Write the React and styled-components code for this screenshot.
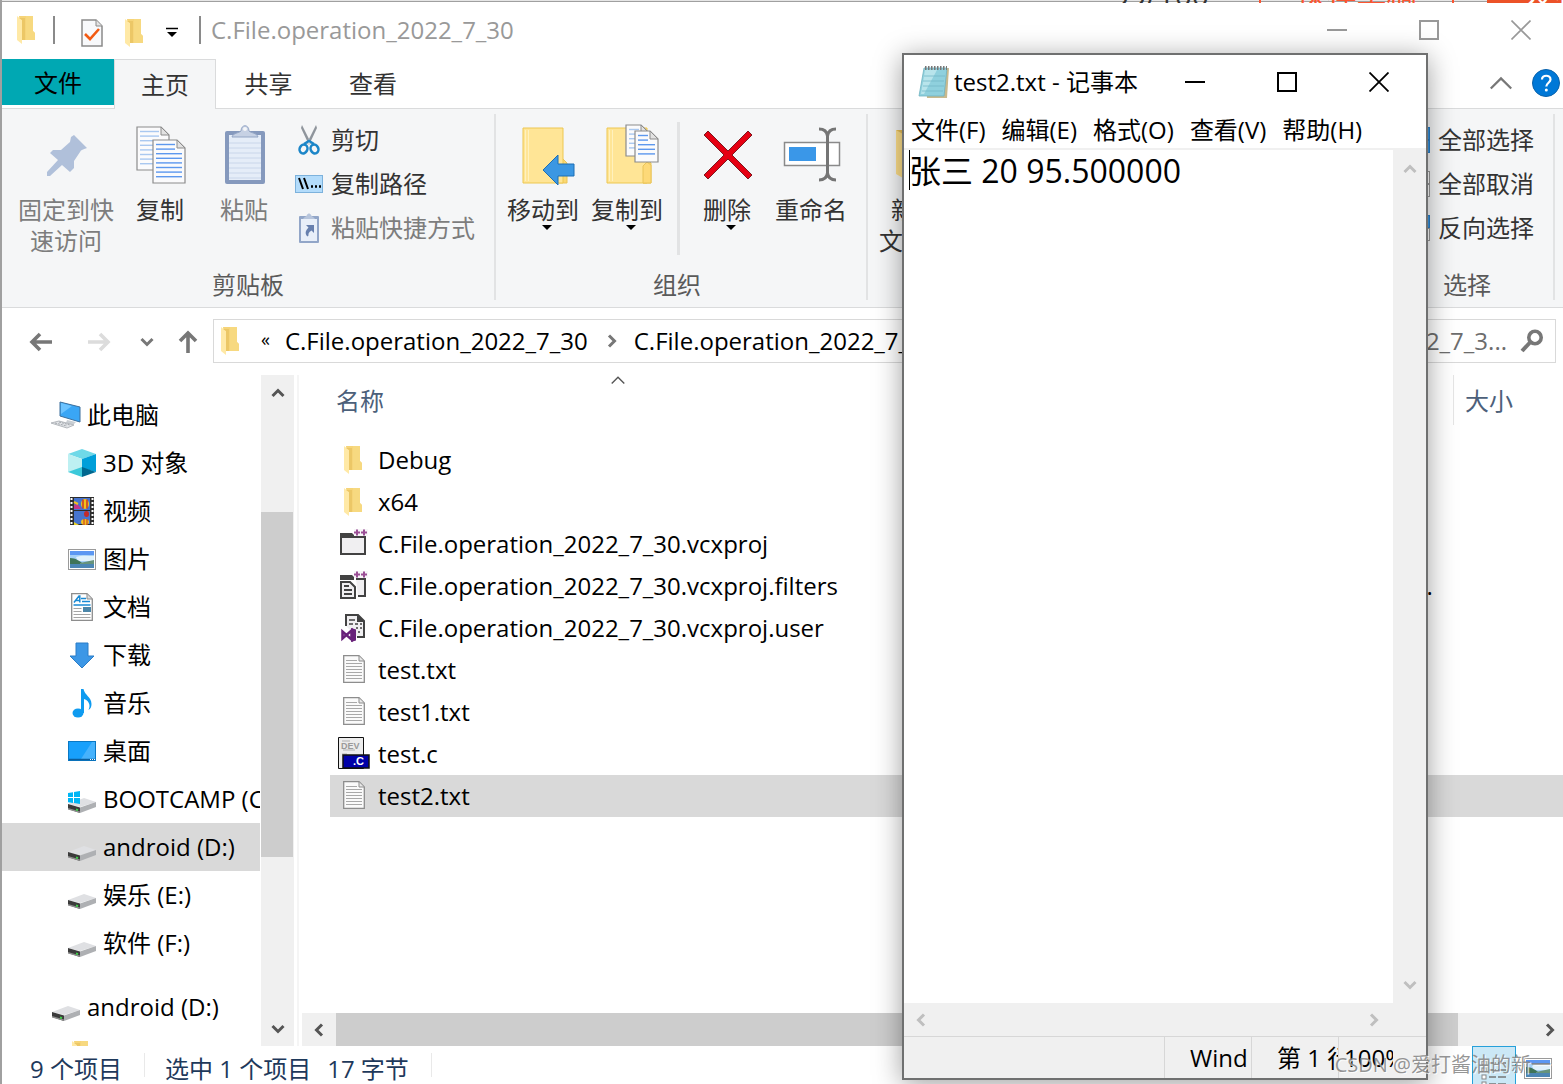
import React from "react";
import styled, { createGlobalStyle, css } from "styled-components";

const Global = createGlobalStyle`
  *, *::before, *::after { box-sizing: border-box; }
  html, body, #root { height: 100%; }
  body { margin: 0; background: #fff; overflow: hidden; }
  body, button, input, textarea, table {
    font-family: "Open Sans", "Noto Sans CJK SC", sans-serif;
    font-size: 24px;
    line-height: 32px;
    color: #000;
  }
  svg { display: block; flex: none; }
`;

const Button = styled.button`
  display: flex;
  align-items: center;
  justify-content: center;
  border: 0;
  padding: 0;
  background: transparent;
  color: inherit;
  white-space: nowrap;
`;

/* ---------- icons ---------- */

const SmallFolder = () => (
  <svg width="20" height="28" viewBox="0 0 20 28">
    <path d="M2 0h14v15l2 2v7H5z" fill="#f6d478" />
    <path d="M9 0h7v15l2 2v7H9z" fill="#f9dc86" opacity=".6" />
    <path d="M0 0l5 4v24l-5-4z" fill="#ffe9a6" />
    <path d="M5 4v20h3V2H2z" fill="#ecc766" />
  </svg>
);

const CheckDoc = () => (
  <svg width="22" height="28" viewBox="0 0 22 28">
    <path d="M1 1h14l6 6v20H1z" fill="#f8f9fb" stroke="#8a8a8a" strokeWidth="1.5" />
    <path d="M15 1v6h6" fill="#e4e4e4" stroke="#8a8a8a" />
    <path d="M4 15l5 5 9-10" fill="none" stroke="#f25a12" strokeWidth="2.6" />
  </svg>
);

const Customize = () => (
  <svg width="12" height="12" viewBox="0 0 12 12">
    <path d="M0 1.500h12" stroke="#000" strokeWidth="1.500" />
    <path d="M1 5h10l-5 5z" fill="#000" />
  </svg>
);

const PinIcon = () => (
  <svg width="40" height="42" viewBox="0 0 40 42">
    <path d="M27 1L40 14l-4 1.500-2 1L27 27v7l-4 4-8-7L3 42H0v-4l11-12-8-7 3-3h8l9-8 1-5z" fill="#b0c0da" />
  </svg>
);

const Page = ({ x, y, w, h, faded }) => {
  const count = Math.floor((h - 5) / 4.6);
  return (
    <g>
      <path d={`M${x} ${y}h${w - 8}l8 8v${h - 8}h${-w}z`} fill="#fbfbfc" stroke="#8c8c8c" strokeWidth="1.2" />
      {Array.from({ length: count }, (_, i) => (
        <path key={i} d={`M${x + 3} ${y + 4.5 + i * 4.6}H${i < 2 ? x + w - 10 : x + w - 3}`} stroke={faded ? "#a9c8f0" : "#5d98ee"} strokeWidth="1.4" />
      ))}
      <path d={`M${x + w - 8} ${y}v8h8z`} fill="#e2e2e2" stroke="#8c8c8c" />
    </g>
  );
};

const CopyIcon = () => (
  <svg width="50" height="58" viewBox="0 0 50 58">
    <Page x={1} y={1} w={32} h={43} faded />
    <Page x={17} y={14} w={32} h={43} />
  </svg>
);

const PasteIcon = () => (
  <svg width="42" height="60" viewBox="0 0 42 60">
    <rect x="1" y="6" width="40" height="53" rx="2" fill="#8599bd" />
    <path d="M5 10h32v45H5z" fill="#e5edf8" />
    {[18, 23, 28, 33, 38, 43, 48, 53].map((y) => (
      <path key={y} d={`M5 ${y}h32`} stroke="#c9d6ea" />
    ))}
    <path d="M8 12c1-4 7-4 9-6 0-7 8-7 8 0 2 2 8 2 9 6z" fill="#c6d1e4" stroke="#93a5c4" />
    <circle cx="21" cy="4" r="2" fill="#f5f6f8" />
  </svg>
);

const ScissorsIcon = () => (
  <svg width="22" height="30" viewBox="0 0 22 30">
    <path d="M4 0l9 18-2 2L3 3zM18 0L9 18l2 2L19 3z" fill="#8f959c" />
    <ellipse cx="5.500" cy="24" rx="3.800" ry="4.500" fill="none" stroke="#1c86c8" strokeWidth="2.500" transform="rotate(25 5.500 24)" />
    <ellipse cx="16.500" cy="24" rx="3.800" ry="4.500" fill="none" stroke="#1c86c8" strokeWidth="2.500" transform="rotate(-25 16.500 24)" />
    <path d="M6 19l5-3 5 3" fill="none" stroke="#1c86c8" strokeWidth="2.500" />
  </svg>
);

const PathIcon = () => (
  <svg width="28" height="18" viewBox="0 0 28 18">
    <rect x=".5" y=".5" width="27" height="17" fill="#b3dcfb" stroke="#7db2dc" />
    <path d="M4 3l4 11M9 3l4 11" stroke="#000" strokeWidth="2" />
    <path d="M16 11.500h2M20 11.500h2M24 11.500h2" stroke="#000" strokeWidth="2.500" />
  </svg>
);

const ShortcutIcon = () => (
  <svg width="20" height="30" viewBox="0 0 20 30">
    <rect x="0" y="3" width="20" height="27" rx="1" fill="#92a6c8" />
    <path d="M2 6h16v22H2z" fill="#e8eff9" />
    <path d="M4 6c1-2 3-2 4-4 1-2 3-2 4 0 1 2 3 2 4 4z" fill="#b7c5dc" />
    <path d="M7 12h8v8l-2.500-2.500c-3 2-3 3-3 5l-1 1c-3-3-2-6 1-9z" fill="#6780ae" />
  </svg>
);

const BigFolder = ({ children }) => (
  <svg width="54" height="64" viewBox="0 0 54 64">
    <path d="M37 40l4-4 4 4v20h-8z" fill="#fbd873" stroke="#eac458" />
    <path d="M1 5h40v55H1z" fill="#ffe596" stroke="#edc750" />
    <path d="M3.500 7v51M6.500 7v51" stroke="#fff1be" />
    {children}
  </svg>
);

const MoveIcon = () => (
  <BigFolder>
    <path d="M21 47l15-15v9h16v12H36v9z" fill="#3b97e3" stroke="#1c6fb5" />
  </BigFolder>
);

const CopyToIcon = () => (
  <BigFolder>
    <path d="M37 60V43l4-4 4 3v18z" fill="#fdd978" stroke="#eac458" />
    <Page x={20} y={2} w={23} h={31} faded />
    <Page x={29} y={8} w={23} h={31} />
  </BigFolder>
);

const DeleteIcon = () => (
  <svg width="50" height="50" viewBox="0 0 50 50">
    <path d="M1 5l4-4 20 20L45 1l4 4-20 20 20 20-4 4-20-20L5 49l-4-4 20-20z" fill="#e60012" stroke="#7d1a20" />
  </svg>
);

const RenameIcon = () => (
  <svg width="58" height="56" viewBox="0 0 58 56">
    <rect x="1.500" y="15.500" width="55" height="23" fill="#fff" stroke="#8a8a8a" strokeWidth="1.500" />
    <rect x="6" y="20" width="27" height="14" fill="#3a97e8" />
    <path d="M36 2c6 0 8 3 8.500 7 .5-4 2.500-7 8.500-7M36 53c6 0 8-3 8.500-7 .5 4 2.500 7 8.500 7M44.500 8v39" fill="none" stroke="#757575" strokeWidth="3" />
  </svg>
);

const NewFolderIcon = () => (
  <svg width="40" height="54" viewBox="0 0 40 54">
    <path d="M0 2h38v45H12z" fill="#e8bf57" />
    <path d="M0 2l12 7v44L0 46z" fill="#ffe08a" />
  </svg>
);

const TilesIcon = ({ top, bottom }) => (
  <svg width="28" height="26" viewBox="0 0 28 26">
    {[0, 9, 18].map((x) => (
      <g key={x}>
        <rect x={x + 0.5} y=".5" width="9" height="12" fill={top ? "#3a97e3" : "#fff"} stroke={top ? "#2a7fc9" : "#9a9a9a"} />
        <rect x={x + 0.5} y="13.500" width="9" height="12" fill={bottom ? "#3a97e3" : "#fff"} stroke={bottom ? "#2a7fc9" : "#9a9a9a"} />
      </g>
    ))}
  </svg>
);

const DropArrow = () => (
  <svg width="10" height="6" viewBox="0 0 10 6">
    <path d="M0 0h10L5 5z" fill="#000" />
  </svg>
);

const turns = { up: 0, right: 90, down: 180, left: 270 };
const Chevron = ({ dir, color = "#555", size = 14, weight = 3 }) => (
  <svg width={size} height={size} viewBox="0 0 14 14">
    <path d="M1.500 10L7 4.500l5.500 5.500" fill="none" stroke={color} strokeWidth={weight} transform={`rotate(${turns[dir]} 7 7)`} />
  </svg>
);

const Arrow = ({ dir, color }) => (
  <svg width="24" height="24" viewBox="0 0 24 24">
    <path d="M12 23V3M4 11l8-8 8 8" fill="none" stroke={color} strokeWidth="3.600" transform={`rotate(${turns[dir]} 12 12)`} />
  </svg>
);

const MinIcon = ({ color, weight }) => (
  <svg width="20" height="20" viewBox="0 0 20 20"><path d="M0 10h20" stroke={color} strokeWidth={weight} /></svg>
);
const MaxIcon = ({ color, weight }) => (
  <svg width="20" height="20" viewBox="0 0 20 20"><rect x="1" y="1" width="18" height="18" fill="none" stroke={color} strokeWidth={weight} /></svg>
);
const CloseIcon = ({ color, weight }) => (
  <svg width="20" height="20" viewBox="0 0 20 20"><path d="M.5 .5l19 19M19.500 .5l-19 19" stroke={color} strokeWidth={weight} /></svg>
);

const HelpIcon = () => (
  <svg width="28" height="28" viewBox="0 0 28 28">
    <circle cx="14" cy="14" r="13.500" fill="#0078d7" stroke="#0a62ab" />
    <path d="M10 10.500c0-5 8.500-5 8.500 0 0 3-4.200 3.500-4.200 7" fill="none" stroke="#fff" strokeWidth="2.200" />
    <circle cx="14.300" cy="21" r="1.500" fill="#fff" />
  </svg>
);

const SearchIcon = () => (
  <svg width="24" height="24" viewBox="0 0 24 24">
    <circle cx="15" cy="8.500" r="6.200" fill="none" stroke="#777" strokeWidth="3.600" />
    <path d="M10.500 13L2 22" stroke="#777" strokeWidth="4" />
  </svg>
);

const ComputerIcon = () => (
  <svg width="32" height="28" viewBox="0 0 32 28">
    <path d="M10 1l20 5v15l-20-6z" fill="#3aa6f5" stroke="#3c6f9c" />
    <path d="M11 2l11 3-11 8z" fill="#6cc3ff" />
    <path d="M17 19l9 2-3 3-7-2z" fill="#c9ced3" />
    <path d="M1 22l8-2 15 4-7 3z" fill="#e3e5e8" stroke="#b4b8bd" />
    <path d="M5 22l12 3M9 21l11 3" stroke="#a2a7ad" strokeDasharray="2 1" />
  </svg>
);
const CubeIcon = () => (
  <svg width="28" height="28" viewBox="0 0 28 28">
    <path d="M0 5l14-5 14 5-14 5z" fill="#6fd9e8" />
    <path d="M0 5l14 5v13L0 23z" fill="#bdf0f2" />
    <path d="M28 5l-14 5v9l14 4z" fill="#009fd9" />
    <path d="M0 23l14-5v10z" fill="#3cc9da" />
    <path d="M28 23l-14-5v10z" fill="#00688f" />
  </svg>
);
const VideoIcon = () => (
  <svg width="24" height="28" viewBox="0 0 24 28">
    <path d="M0 0h24v28H0z" fill="#2d2d2d" />
    <path d="M4 1h16v12H4zM4 14h16v13H4z" fill="#4674cf" />
    <path d="M1.500 1v27M22.500 1v27" stroke="#fff" strokeWidth="2" strokeDasharray="2 2" />
    <ellipse cx="15" cy="7" rx="4" ry="5" fill="#f2c21c" />
    <path d="M13 2.500v9M17 2.500v9" stroke="#c42b2b" strokeWidth="1.400" />
    <path d="M4 8c3-2 5 0 7 4H4z" fill="#c2388b" />
    <path d="M4 5l4 2" stroke="#f2c21c" strokeWidth="2" />
    <ellipse cx="16.500" cy="17" rx="2.500" ry="3" fill="#c42b2b" />
    <ellipse cx="15" cy="25" rx="4" ry="3" fill="#f2c21c" />
    <path d="M14 22v6M17 22v6" stroke="#c42b2b" />
    <path d="M4 25l5 3H4z" fill="#e9d22a" />
  </svg>
);
const PictureIcon = () => (
  <svg width="28" height="21" viewBox="0 0 28 21">
    <rect x=".5" y=".5" width="27" height="20" fill="#fff" stroke="#9a9a9a" />
    <path d="M2 2h24v17H2z" fill="#a5d0f6" />
    <path d="M2 2h24v4H2z" fill="#5c97f2" />
    <path d="M8 8c6-2 12-1 18-1v5H10z" fill="#e0f1fb" />
    <path d="M2 9c6 0 9 3 14 6H2z" fill="#3f7458" />
    <path d="M12 14l14-3v4H12z" fill="#66937c" />
    <path d="M2 15h24v4H2z" fill="#4c86b4" />
  </svg>
);
const DocumentIcon = () => (
  <svg width="22" height="28" viewBox="0 0 22 28">
    <path d="M.7 .7H16l5.300 5.300v21.300H.7z" fill="#fff" stroke="#8d8d8d" strokeWidth="1.300" />
    <path d="M16 1v5h5" fill="#ddd" stroke="#8d8d8d" />
    <path d="M3 9.500l5-6.500h.8v6.500M5 7.500h4" fill="none" stroke="#1a8ad4" strokeWidth="1.500" />
    <path d="M10 5.500h5M11 8.500h8M2.500 12h17" stroke="#1a8ad4" strokeWidth="1.300" />
    <path d="M2.500 15.500h8M2.500 18.500h8M2.500 21.500h17M2.500 24.500h17" stroke="#a5a5a5" />
    <path d="M12 14h8v5h-8z" fill="#4c86a8" />
  </svg>
);
const DownloadIcon = () => (
  <svg width="26" height="27" viewBox="0 0 26 27">
    <path d="M7 1h12v13h6L13 26 1 14h6z" fill="#3c97e6" stroke="#2b7dc7" />
  </svg>
);
const MusicIcon = () => (
  <svg width="20" height="29" viewBox="0 0 20 29">
    <ellipse cx="6" cy="24" rx="5.500" ry="4.500" fill="#0f9bf0" />
    <path d="M9 0h2.500c1 6 8 8 8 15 0 3-1 5-3 6 3-6-1-10-4.500-11V24H9z" fill="#0f9bf0" />
  </svg>
);
const DesktopIcon = () => (
  <svg width="28" height="21" viewBox="0 0 28 21">
    <rect x=".5" y=".5" width="27" height="19" fill="#18a0fb" stroke="#0a78c4" />
    <path d="M13 18L24 1h3v17z" fill="#46b2fc" />
    <path d="M1 18.500h26" stroke="#0b5e9c" strokeWidth="1.500" />
    <path d="M22 18.500h5" stroke="#fff" strokeDasharray="1 1" />
  </svg>
);
const DriveIcon = ({ system }) => (
  <svg width="28" height="28" viewBox="0 0 28 28">
    <path d="M0 19l16-6 12 4-16 5z" fill="#dfe0e3" />
    <path d="M0 19l12 3.500V28L0 24z" fill="#3b3b3b" />
    <path d="M12 22.500L28 17v5l-16 6z" fill="#aeb0b3" />
    <path d="M0 24.500l12 3.500v-1.500L0 23z" fill="#8e8e8e" />
    <path d="M8 24.500l2 .6" stroke="#41d04b" strokeWidth="2" />
    {system && <path d="M0 8l5-.8V12H0zM6 7l6-1v6H6zM0 13h5v5l-5-.8zM6 13h6v6l-6-1z" fill="#00b6f5" />}
  </svg>
);
const VcxprojIcon = () => (
  <svg width="28" height="30" viewBox="0 0 28 30">
    <path d="M1 8h24v17H1z" fill="#f0eff1" stroke="#424242" strokeWidth="2" />
    <path d="M0 4h12l2 2v3H0z" fill="#424242" />
    <path d="M14 0h14v7H14z" fill="#f7f6f8" />
    <path d="M14 3.500h6M17 .5v6M21 3.500h6M24 .5v6" stroke="#9b4f96" strokeWidth="2" />
  </svg>
);
const FiltersIcon = () => (
  <svg width="28" height="30" viewBox="0 0 28 30">
    <path d="M16 8h9v17h-7" fill="#f0eff1" stroke="#424242" strokeWidth="2" />
    <path d="M0 4h12l2 2v3H0z" fill="#424242" />
    <path d="M1 11h9l5 5v11H1z" fill="#f0eff1" stroke="#424242" strokeWidth="2" />
    <path d="M4 15h5M4 19h8M4 23h8" stroke="#424242" strokeWidth="2" />
    <path d="M14 0h14v7H14z" fill="#f7f6f8" />
    <path d="M14 3.500h6M17 .5v6M21 3.500h6M24 .5v6" stroke="#9b4f96" strokeWidth="2" />
  </svg>
);
const UserIcon = () => (
  <svg width="28" height="30" viewBox="0 0 28 30">
    <path d="M6 13V2h12l6 6v16h-7" fill="#f0eff1" stroke="#424242" strokeWidth="2" />
    <path d="M17 1v8h8z" fill="#424242" />
    <path d="M9 7h6M9 11h4M15 11h3M20 11h2M16 15h2M20 15h2M18 19h2" stroke="#424242" strokeWidth="1.500" />
    <path d="M2.500 18.500v7l9-8v9z" fill="none" stroke="#68217a" strokeWidth="2.500" />
    <path d="M11 15l5 1.500v11L11 29z" fill="#68217a" />
  </svg>
);
const TextFileIcon = () => (
  <svg width="22" height="30" viewBox="0 0 22 30">
    <path d="M.7 .7H16l5.300 5.300v21.300H.7z" fill="#fafafa" stroke="#8d8d8d" strokeWidth="1.300" />
    <path d="M16 1v5h5" fill="#e8e8e8" stroke="#8d8d8d" />
    {[5.5, 8.5, 11.5, 14.5, 17.5, 20.5, 23.5].map((y) => (
      <path key={y} d={`M3 ${y}h${y < 6 ? 11 : 16}`} stroke="#a8a8a8" />
    ))}
  </svg>
);
const DevCIcon = () => (
  <svg width="32" height="34" viewBox="0 0 32 34">
    <path d="M.5 .5h25v31H.5z" fill="#ececec" stroke="#111" />
    <path d="M4 4h8M5 13h12M4 17h5" stroke="#c4c4c4" strokeWidth="1.500" />
    <text x="3" y="12" fontSize="9" fontWeight="700" fill="#9a9a9a" fontFamily="Liberation Sans, sans-serif">DEV</text>
    <rect x="5" y="18" width="26" height="13" fill="#0000a8" stroke="#111" strokeWidth="1.500" />
    <text x="15" y="28" fontSize="11" fontWeight="700" fill="#fff" fontFamily="Liberation Sans, sans-serif">.C</text>
  </svg>
);
const NotepadIcon = () => (
  <svg width="32" height="34" viewBox="0 0 32 34">
    <path d="M7 4l24-1-2 30H9z" fill="#c9b98d" />
    <path d="M6 3h23l-3 28H1z" fill="#8fd0dd" stroke="#6fb2c0" strokeWidth=".8" />
    <path d="M7 5h12L6 29H3z" fill="#c2e9ef" opacity=".8" />
    <path d="M6 11h21M5 16h21M5 21h21M4 26h21" stroke="#74b8c8" strokeWidth=".8" />
    <path d="M7 3h22" stroke="#777" strokeWidth="4" strokeDasharray="1.500 1.500" />
  </svg>
);
const DetailsIcon = () => (
  <svg width="26" height="26" viewBox="0 0 26 26">
    {[1, 8, 15, 22].map((y) => (
      <g key={y}>
        <rect x="1" y={y} width="4" height="4" fill="#fff" stroke="#888" />
        <path d={`M8 ${y + 2}h7M17 ${y + 2}h8`} stroke="#777" strokeWidth="1.500" />
      </g>
    ))}
  </svg>
);

/* ---------- explorer ---------- */

const Desktop = styled.div`
  position: relative;
  height: 100vh;
  overflow: hidden;
`;

const Explorer = styled.main`
  display: flex;
  flex-direction: column;
  height: 100%;
  border-left: 2px solid #a0a0a0;
`;

const BackStrip = styled.div`
  flex: none;
  display: flex;
  align-items: flex-end;
  justify-content: flex-end;
  height: 3px;
  overflow: hidden;
  background: linear-gradient(#e6e6e6 0 1px, #a0a0a0 1px 2px, #fff 2px);
  font-size: 30px;
`;
const StripText = styled.span`
  margin: 0 50px -8px 0;
  line-height: 32px;
  color: #333;
`;
const StripDraft = styled.span`
  width: 195px;
  margin: 0 33px -8px 0;
  border: solid #fc5531;
  border-width: 0 2px;
  line-height: 32px;
  text-align: center;
  color: #fc5531;
`;
const StripPublish = styled.span`
  width: 76px;
  margin-bottom: -8px;
  padding-left: 38px;
  background: #ec5228;
  line-height: 32px;
  white-space: nowrap;
  color: #fff;
`;

const TitleBar = styled.header`
  flex: none;
  display: flex;
  align-items: center;
  height: 56px;
  padding: 0 0 2px 15px;
  color: #999;
`;
const QuickBar = styled.div`
  display: flex;
  align-items: center;
`;
const Rule = styled.span`
  width: 2px;
  height: 28px;
  background: #8a8a8a;
  margin: 0 ${(p) => p.$after}px 0 ${(p) => p.$before}px;
`;
const QuickButton = styled(Button)`
  width: ${(p) => p.$w || 43}px;
  height: 40px;
  padding-top: 5px;
`;
const Title = styled.h1`
  flex: 1;
  margin: 0;
  font: inherit;
`;
const CaptionButtons = styled.div`
  display: flex;
  gap: 8px;
`;
const CaptionButton = styled(Button)`
  width: 84px;
  height: 48px;
`;

const Tabs = styled.nav`
  flex: none;
  display: flex;
  height: 50px;
  border-bottom: 1px solid #dadbdc;
`;
const Tab = styled(Button)`
  width: ${(p) => p.$w}px;
  height: 50px;
  color: #333;
  ${(p) => p.$kind === "file" && css`
    height: 46px;
    padding-top: 2px;
    background: #00a8b3;
    color: #000;
  `}
  ${(p) => p.$kind === "open" && css`
    background: #f5f6f7;
    border: 1px solid #dadbdc;
    border-bottom: 0;
  `}
`;
const TabTools = styled.div`
  display: flex;
  align-items: center;
  gap: 18px;
  margin-left: auto;
  padding: 0 3px 2px 0;
`;

const Ribbon = styled.section`
  flex: none;
  display: flex;
  align-items: stretch;
  height: 199px;
  padding: 5px 8px 7px 0;
  background: #f5f6f7;
  border-bottom: 1px solid #dadbdc;
  color: #333;
`;
const Group = styled.div`
  display: flex;
  flex-direction: column;
  padding: 0 ${(p) => p.$right}px 0 ${(p) => p.$left}px;
  width: ${(p) => (p.$w ? `${p.$w}px` : "auto")};
  flex: ${(p) => (p.$grow ? "1" : "none")};
  border-right: 2px solid #e2e3e4;
`;
const GroupBody = styled.div`
  display: flex;
  flex: 1;
`;
const GroupLabel = styled.div`
  height: 31px;
  text-align: center;
  color: #5a5a5a;
`;
const BigButton = styled(Button)`
  flex-direction: column;
  justify-content: flex-start;
  width: ${(p) => p.$w || 84}px;
  padding-top: 9px;
  color: ${(p) => (p.$off ? "#7d7d7d" : "#333")};
`;
const IconBox = styled.span`
  display: flex;
  align-items: center;
  justify-content: center;
  height: 64px;
  margin-bottom: 7px;
  padding-left: ${(p) => (p.$menu ? 12 : 2)}px;
`;
const BigLabel = styled.span`
  line-height: 31px;
  white-space: pre-line;
`;
const ArrowBox = styled.span`
  padding-left: 8px;
`;
const GroupRule = styled.span`
  width: 3px;
  height: 133px;
  margin: 8px 5px 0 8px;
  background: #e2e3e4;
`;
const SmallList = styled.div`
  display: flex;
  flex-direction: column;
  padding: 4px 0 0 ${(p) => p.$left}px;
`;
const SmallButton = styled(Button)`
  justify-content: flex-start;
  gap: 8px;
  height: 44px;
  color: ${(p) => (p.$off ? "#7d7d7d" : "#333")};
`;
const SmallIcon = styled.span`
  display: flex;
  justify-content: center;
  width: 28px;
`;

const AddressRow = styled.div`
  flex: none;
  display: flex;
  height: 67px;
  padding: 11px 7px 12px 10px;
`;
const NavButton = styled(Button)`
  width: ${(p) => p.$w}px;
  height: 46px;
`;
const AddressBox = styled.div`
  flex: 1;
  display: flex;
  align-items: center;
  margin-left: 3px;
  padding-left: 7px;
  border: 1px solid #d9d9d9;
  overflow: hidden;
`;
const Crumb = styled(Button)`
  margin: 0 17px 0 15px;
`;
const Overflow = styled.span`
  display: flex;
  margin-left: 20px;
  padding-bottom: 4px;
  font-size: 18px;
  line-height: 24px;
`;
const SearchBox = styled.label`
  display: flex;
  align-items: center;
  width: 420px;
  margin-left: 12px;
  padding-right: 11px;
  border: 1px solid #d9d9d9;
`;
const SearchInput = styled.input`
  flex: 1;
  min-width: 0;
  margin-right: 13px;
  border: 0;
  outline: 0;
  padding: 0;
  background: transparent;
  text-align: right;
  &::placeholder { color: #6d6d6d; opacity: 1; }
`;

const Body = styled.div`
  flex: 1;
  min-height: 0;
  display: flex;
`;
const NavPane = styled.nav`
  width: 258px;
  padding-top: 16px;
  overflow: hidden;
`;
const NavItem = styled.a`
  display: flex;
  align-items: center;
  gap: 7px;
  height: 48px;
  padding-left: ${(p) => (p.$level ? 66 : 50)}px;
  margin-top: ${(p) => (p.$gap ? 16 : 0)}px;
  background: ${(p) => (p.$on ? "#d9d9d9" : "transparent")};
  color: #000;
  text-decoration: none;
  white-space: nowrap;
`;
const NavIcon = styled.span`
  display: flex;
  justify-content: center;
  align-items: center;
  width: 28px;
`;
const VScroll = styled.div`
  display: flex;
  flex-direction: column;
  width: 33px;
  margin-left: 1px;
  background: #f0f0f0;
`;
const VThumb = styled.div`
  flex: 345;
  margin-right: 1px;
  background: #cdcdcd;
`;
const Space = styled.div`
  flex: ${(p) => p.$grow};
`;
const ScrollButton = styled(Button)`
  flex: none;
  width: ${(p) => p.$w || 33}px;
  height: ${(p) => p.$h || 34}px;
`;
const Divider = styled.div`
  width: 2px;
  margin: 0 3px;
  background: #f5f5f5;
`;
const Content = styled.section`
  flex: 1;
  min-width: 0;
  display: flex;
  flex-direction: column;
`;
const ListArea = styled.div`
  flex: 1;
  min-height: 0;
  padding-left: 28px;
  overflow: hidden;
`;
const Table = styled.table`
  width: 100%;
  table-layout: fixed;
  border-collapse: collapse;
`;
const Th = styled.th`
  width: ${(p) => (p.$w ? `${p.$w}px` : "auto")};
  height: 64px;
  padding: 0;
  vertical-align: top;
  text-align: left;
  font-weight: 400;
  color: #4c607a;
`;
const HeadCell = styled.div`
  display: flex;
  flex-direction: column;
  height: 50px;
  padding: ${(p) => (p.$sorted ? 0 : 10)}px 0 0 ${(p) => (p.$line ? 11 : 6)}px;
  border-left: ${(p) => (p.$line ? "1px solid #e5e5e5" : "0")};
`;
const SortMark = styled.span`
  display: flex;
  justify-content: center;
  align-items: center;
  height: 10px;
  padding-right: 10px;
`;
const Row = styled.tr`
  height: 42px;
  background: ${(p) => (p.$on ? "#d9d9d9" : "transparent")};
`;
const Td = styled.td`
  padding: 0;
  white-space: nowrap;
  overflow: hidden;
`;
const FileName = styled.div`
  display: flex;
  align-items: center;
  gap: 7px;
  padding-left: 7px;
`;
const FileIcon = styled.span`
  display: flex;
  justify-content: center;
  width: 34px;
`;
const HScroll = styled.div`
  flex: none;
  display: flex;
  height: 33px;
  background: #f0f0f0;
`;
const HThumb = styled.div`
  flex: 1122;
  background: #cdcdcd;
`;

const StatusBar = styled.footer`
  flex: none;
  display: flex;
  align-items: center;
  height: 38px;
  padding-left: 28px;
  color: #1e395b;
`;
const StatusText = styled.span`
  padding-top: 8px;
  margin-right: ${(p) => p.$gap}px;
  white-space: nowrap;
`;
const StatusRule = styled.span`
  width: 1px;
  height: 24px;
  margin-right: 20px;
  background: #e9e9e9;
`;
const ViewButtons = styled.div`
  display: flex;
  margin-left: auto;
  gap: 8px;
  padding-right: 11px;
`;
const ViewButton = styled(Button)`
  height: 38px;
  padding-top: 6px;
  ${(p) => p.$on && css`
    width: 44px;
    padding-top: 14px;
    border: 1px solid #26a0da;
    border-bottom: 0;
    background: #cbe8f6;
  `}
`;

/* ---------- notepad ---------- */

const Notepad = styled.section`
  position: absolute;
  top: 53px;
  right: 135px;
  bottom: 4px;
  width: 526px;
  display: flex;
  flex-direction: column;
  border: 2px solid #6f7070;
  background: #fff;
  box-shadow: 0 4px 26px rgba(0, 0, 0, 0.38);
`;
const NoteTitle = styled.header`
  flex: none;
  display: flex;
  align-items: center;
  height: 57px;
  padding: 0 1px 3px 14px;
`;
const NoteName = styled.h2`
  flex: 1;
  margin: 0 0 0 4px;
  font: inherit;
  white-space: nowrap;
`;
const NoteCaption = styled(Button)`
  width: 92px;
  height: 48px;
`;
const Menu = styled.nav`
  flex: none;
  display: flex;
  gap: 16px;
  height: 36px;
  padding-left: 7px;
`;
const NoteBody = styled.div`
  flex: 1;
  min-height: 0;
  display: flex;
  border-top: 2px solid #f0f0f0;
`;
const Editor = styled.div`
  position: relative;
  flex: 1;
  display: flex;
`;
const Text = styled.textarea`
  flex: 1;
  border: 0;
  outline: 0;
  resize: none;
  padding: 0 5px;
  overflow: hidden;
  font-size: 32px;
  line-height: 42px;
`;
const Caret = styled.span`
  position: absolute;
  left: 5px;
  top: 0;
  width: 1px;
  height: 40px;
  background: #000;
`;
const NoteHScroll = styled.div`
  flex: none;
  display: flex;
  justify-content: space-between;
  height: 33px;
  padding-right: 33px;
  background: #f0f0f0;
`;
const NoteStatus = styled.footer`
  flex: none;
  display: flex;
  justify-content: flex-end;
  height: 42px;
  padding-right: 33px;
  border-top: 1px solid #d7d7d7;
  background: #f0f0f0;
`;
const NoteCell = styled.span`
  width: ${(p) => p.$w}px;
  padding: 5px 0 0 ${(p) => p.$left}px;
  border-left: 1px solid #d7d7d7;
  overflow: hidden;
  white-space: nowrap;
`;

const Watermark = styled.div`
  position: absolute;
  right: 12px;
  bottom: 4px;
  font-size: 20px;
  line-height: 30px;
  color: rgba(130, 130, 130, 0.85);
  text-shadow: 1px 1px 0 rgba(255, 255, 255, 0.8);
  white-space: nowrap;
  pointer-events: none;
`;

const navItems = [
  { label: "此电脑", icon: <ComputerIcon />, level: 0 },
  { label: "3D 对象", icon: <CubeIcon />, level: 1 },
  { label: "视频", icon: <VideoIcon />, level: 1 },
  { label: "图片", icon: <PictureIcon />, level: 1 },
  { label: "文档", icon: <DocumentIcon />, level: 1 },
  { label: "下载", icon: <DownloadIcon />, level: 1 },
  { label: "音乐", icon: <MusicIcon />, level: 1 },
  { label: "桌面", icon: <DesktopIcon />, level: 1 },
  { label: "BOOTCAMP (C:)", icon: <DriveIcon system />, level: 1 },
  { label: "android (D:)", icon: <DriveIcon />, level: 1, on: true },
  { label: "娱乐 (E:)", icon: <DriveIcon />, level: 1 },
  { label: "软件 (F:)", icon: <DriveIcon />, level: 1 },
  { label: "android (D:)", icon: <DriveIcon />, level: 0, gap: true },
  { label: "Android_D", icon: <SmallFolder />, level: 1 },
];

const files = [
  { name: "Debug", icon: <SmallFolder />, type: "文件夹" },
  { name: "x64", icon: <SmallFolder />, type: "文件夹" },
  { name: "C.File.operation_2022_7_30.vcxproj", icon: <VcxprojIcon />, type: "VC++ Project" },
  { name: "C.File.operation_2022_7_30.vcxproj.filters", icon: <FiltersIcon />, type: "VC++ Project Filter..." },
  { name: "C.File.operation_2022_7_30.vcxproj.user", icon: <UserIcon />, type: "Per-User Project" },
  { name: "test.txt", icon: <TextFileIcon />, type: "文本文档" },
  { name: "test1.txt", icon: <TextFileIcon />, type: "文本文档" },
  { name: "test.c", icon: <DevCIcon />, type: "C Source File" },
  { name: "test2.txt", icon: <TextFileIcon />, type: "文本文档", on: true },
];

const RibbonButton = ({ icon, label, w, off, menu, folder }) => (
  <BigButton $w={w} $off={off}>
    <IconBox $menu={folder}>{icon}</IconBox>
    <BigLabel>{label}</BigLabel>
    {menu && <ArrowBox><DropArrow /></ArrowBox>}
  </BigButton>
);

const ListButton = ({ icon, label, off }) => (
  <SmallButton $off={off}>
    <SmallIcon>{icon}</SmallIcon>
    {label}
  </SmallButton>
);

export default function App() {
  return (
    <>
      <Global />
      <Desktop>
        <Explorer>
          <BackStrip>
            <StripText>99/100</StripText>
            <StripDraft>保存草稿</StripDraft>
            <StripPublish>发布</StripPublish>
          </BackStrip>
          <TitleBar>
            <QuickBar>
              <SmallFolder />
              <Rule $before={16} $after={15} />
              <QuickButton aria-label="属性"><CheckDoc /></QuickButton>
              <QuickButton aria-label="新建文件夹"><SmallFolder /></QuickButton>
              <QuickButton $w={32} aria-label="自定义快速访问工具栏"><Customize /></QuickButton>
              <Rule $before={11} $after={10} />
            </QuickBar>
            <Title>C.File.operation_2022_7_30</Title>
            <CaptionButtons>
              <CaptionButton aria-label="最小化"><MinIcon color="#999" weight={2} /></CaptionButton>
              <CaptionButton aria-label="最大化"><MaxIcon color="#999" weight={2} /></CaptionButton>
              <CaptionButton aria-label="关闭"><CloseIcon color="#999" weight={1.6} /></CaptionButton>
            </CaptionButtons>
          </TitleBar>
          <Tabs>
            <Tab $w={112} $kind="file">文件</Tab>
            <Tab $w={102} $kind="open">主页</Tab>
            <Tab $w={105}>共享</Tab>
            <Tab $w={104}>查看</Tab>
            <TabTools>
              <Chevron dir="up" size={26} weight={1.2} color="#777" />
              <Button aria-label="帮助"><HelpIcon /></Button>
            </TabTools>
          </Tabs>
          <Ribbon>
            <Group $left={12} $right={12} $w={494}>
              <GroupBody>
                <RibbonButton w={104} off icon={<PinIcon />} label={"固定到快\n速访问"} />
                <RibbonButton icon={<CopyIcon />} label="复制" />
                <RibbonButton off icon={<PasteIcon />} label="粘贴" />
                <SmallList $left={9}>
                  <ListButton icon={<ScissorsIcon />} label="剪切" />
                  <ListButton icon={<PathIcon />} label="复制路径" />
                  <ListButton off icon={<ShortcutIcon />} label="粘贴快捷方式" />
                </SmallList>
              </GroupBody>
              <GroupLabel>剪贴板</GroupLabel>
            </Group>
            <Group $left={5} $right={13}>
              <GroupBody>
                <RibbonButton menu folder icon={<MoveIcon />} label="移动到" />
                <RibbonButton menu folder icon={<CopyToIcon />} label="复制到" />
                <GroupRule />
                <RibbonButton menu icon={<DeleteIcon />} label="删除" />
                <RibbonButton icon={<RenameIcon />} label="重命名" />
              </GroupBody>
              <GroupLabel>组织</GroupLabel>
            </Group>
            <Group $left={5} $right={5} $grow>
              <GroupBody>
                <RibbonButton icon={<NewFolderIcon />} label={"新建\n文件夹"} />
              </GroupBody>
              <GroupLabel>新建</GroupLabel>
            </Group>
            <Group $left={20} $right={20} $w={174}>
              <GroupBody>
                <SmallList $left={1}>
                  <ListButton icon={<TilesIcon top bottom />} label="全部选择" />
                  <ListButton icon={<TilesIcon />} label="全部取消" />
                  <ListButton icon={<TilesIcon top />} label="反向选择" />
                </SmallList>
              </GroupBody>
              <GroupLabel>选择</GroupLabel>
            </Group>
          </Ribbon>
          <AddressRow>
            <NavButton $w={58} aria-label="后退"><Arrow dir="left" color="#777" /></NavButton>
            <NavButton $w={58} aria-label="前进"><Arrow dir="right" color="#dcdcdc" /></NavButton>
            <NavButton $w={38} aria-label="最近位置"><Chevron dir="down" color="#777" /></NavButton>
            <NavButton $w={44} aria-label="上移"><Arrow dir="up" color="#777" /></NavButton>
            <AddressBox>
              <SmallFolder />
              <Overflow>«</Overflow>
              <Crumb>C.File.operation_2022_7_30</Crumb>
              <Chevron dir="right" color="#777" />
              <Crumb>C.File.operation_2022_7_30</Crumb>
            </AddressBox>
            <SearchBox>
              <SearchInput aria-label="搜索" placeholder="搜索“C.File.operation_2022_7_3..." />
              <SearchIcon />
            </SearchBox>
          </AddressRow>
          <Body>
            <NavPane>
              {navItems.map((n, i) => (
                <NavItem key={i} href="#" $level={n.level} $on={n.on} $gap={n.gap}>
                  <NavIcon>{n.icon}</NavIcon>
                  {n.label}
                </NavItem>
              ))}
            </NavPane>
            <VScroll>
              <ScrollButton $h={36} aria-label="向上滚动"><Chevron dir="up" /></ScrollButton>
              <Space $grow={101} />
              <VThumb />
              <Space $grow={155} />
              <ScrollButton aria-label="向下滚动"><Chevron dir="down" /></ScrollButton>
            </VScroll>
            <Divider />
            <Content>
              <ListArea>
                <Table>
                  <thead>
                    <tr>
                      <Th>
                        <HeadCell $sorted>
                          <SortMark><Chevron dir="up" size={16} weight={1.2} color="#555" /></SortMark>
                          名称
                        </HeadCell>
                      </Th>
                      <Th $w={300}><HeadCell $line>修改日期</HeadCell></Th>
                      <Th $w={243}><HeadCell $line>类型</HeadCell></Th>
                      <Th $w={110}><HeadCell $line>大小</HeadCell></Th>
                    </tr>
                  </thead>
                  <tbody>
                    {files.map((f) => (
                      <Row key={f.name} $on={f.on}>
                        <Td><FileName><FileIcon>{f.icon}</FileIcon>{f.name}</FileName></Td>
                        <Td />
                        <Td>{f.type}</Td>
                        <Td />
                      </Row>
                    ))}
                  </tbody>
                </Table>
              </ListArea>
              <HScroll>
                <ScrollButton $w={34} $h={33} aria-label="向左滚动"><Chevron dir="left" /></ScrollButton>
                <HThumb />
                <Space $grow={78} />
                <ScrollButton $w={27} $h={33} aria-label="向右滚动"><Chevron dir="right" /></ScrollButton>
              </HScroll>
            </Content>
          </Body>
          <StatusBar>
            <StatusText $gap={22}>9 个项目</StatusText>
            <StatusRule />
            <StatusText $gap={16}>选中 1 个项目</StatusText>
            <StatusText $gap={22}>17 字节</StatusText>
            <StatusRule />
            <ViewButtons>
              <ViewButton $on aria-label="详细信息"><DetailsIcon /></ViewButton>
              <ViewButton aria-label="大缩略图"><PictureIcon /></ViewButton>
            </ViewButtons>
          </StatusBar>
        </Explorer>

        <Notepad>
          <NoteTitle>
            <NotepadIcon />
            <NoteName>test2.txt - 记事本</NoteName>
            <NoteCaption aria-label="最小化"><MinIcon color="#000" weight={2} /></NoteCaption>
            <NoteCaption aria-label="最大化"><MaxIcon color="#000" weight={2} /></NoteCaption>
            <NoteCaption aria-label="关闭"><CloseIcon color="#000" weight={1.8} /></NoteCaption>
          </NoteTitle>
          <Menu>
            {["文件(F)", "编辑(E)", "格式(O)", "查看(V)", "帮助(H)"].map((m) => (
              <Button key={m}>{m}</Button>
            ))}
          </Menu>
          <NoteBody>
            <Editor>
              <Text aria-label="文本" spellCheck={false} defaultValue="张三 20 95.500000" />
              <Caret />
            </Editor>
            <VScroll>
              <ScrollButton $h={38} aria-label="向上滚动"><Chevron dir="up" color="#bfbfbf" /></ScrollButton>
              <Space $grow={1} />
              <ScrollButton $h={36} aria-label="向下滚动"><Chevron dir="down" color="#bfbfbf" /></ScrollButton>
            </VScroll>
          </NoteBody>
          <NoteHScroll>
            <ScrollButton $h={33} aria-label="向左滚动"><Chevron dir="left" color="#bfbfbf" /></ScrollButton>
            <ScrollButton $w={38} $h={33} aria-label="向右滚动"><Chevron dir="right" color="#bfbfbf" /></ScrollButton>
          </NoteHScroll>
          <NoteStatus>
            <NoteCell $w={87} $left={25}>Wind</NoteCell>
            <NoteCell $w={87} $left={25}>第 1 行</NoteCell>
            <NoteCell $w={55} $left={5}>100%</NoteCell>
          </NoteStatus>
        </Notepad>

        <Watermark>CSDN @爱打酱油的新一</Watermark>
      </Desktop>
    </>
  );
}
